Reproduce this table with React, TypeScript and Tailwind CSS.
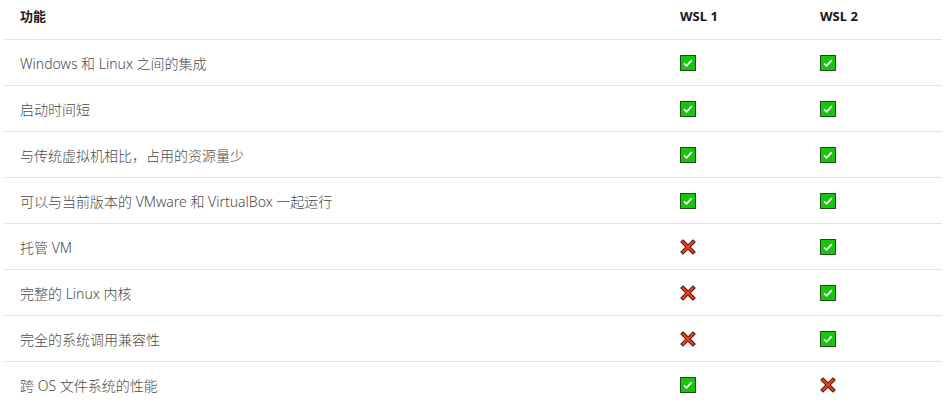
const rows: [string, boolean, boolean][] = [
  ['Windows 和 Linux 之间的集成', true, true],
  ['启动时间短', true, true],
  ['与传统虚拟机相比，占用的资源量少', true, true],
  ['可以与当前版本的 VMware 和 VirtualBox 一起运行', true, true],
  ['托管 VM', false, true],
  ['完整的 Linux 内核', false, true],
  ['完全的系统调用兼容性', false, true],
  ['跨 OS 文件系统的性能', true, false],
];

const Check = () => (
  <svg width="16" height="16" viewBox="0 0 16 16" className="block">
    <rect x="0.5" y="0.5" width="15" height="15" fill="#16c60c" stroke="#1e4d1a" />
    <path d="M4 8.3 L6.6 10.8 L11.8 5.2" fill="none" stroke="#fff" strokeWidth="1.7" />
  </svg>
);

const Cross = () => (
  <svg width="16" height="16" viewBox="0 0 16 16" className="block">
    <path d="M3 3 L13 13 M13 3 L3 13" stroke="#3a0d08" strokeWidth="4" strokeLinecap="square" />
    <path d="M3 3 L13 13 M13 3 L3 13" stroke="#e8401e" strokeWidth="2.4" strokeLinecap="square" />
  </svg>
);

export default function App() {
  return (
    <div className="bg-white w-[946px] h-[411px] px-[4px] font-['Noto_Sans','Noto_Sans_CJK_SC',sans-serif]">
      <table className="w-[938px] border-collapse text-[14px]">
        <thead>
          <tr className="text-left text-[#171717]">
            <th className="h-[39px] w-[660px] px-4 pb-[6px] font-bold text-[13px]">功能</th>
            <th className="h-[39px] w-[140px] px-4 pb-[6px] font-bold text-[13px]">WSL 1</th>
            <th className="h-[39px] px-4 pb-[6px] font-bold text-[13px]">WSL 2</th>
          </tr>
        </thead>
        <tbody>
          {rows.map(([label, a, b]) => (
            <tr key={label} className="border-t border-[#e3e3e3]">
              <td className="h-[46px] px-4 pt-[2px] text-[#4a4a4a] text-[14px] font-light">{label}</td>
              <td className="h-[46px] px-4 pt-[1px]">{a ? <Check /> : <Cross />}</td>
              <td className="h-[46px] px-4 pt-[1px]">{b ? <Check /> : <Cross />}</td>
            </tr>
          ))}
        </tbody>
      </table>
    </div>
  );
}
